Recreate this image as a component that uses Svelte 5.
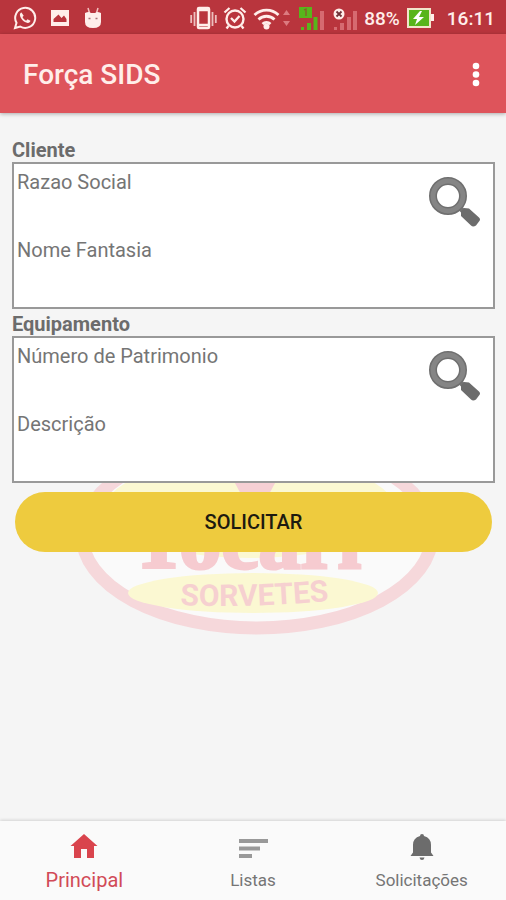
<script>
  const groups = [
    { id: 'cliente', title: 'Cliente', fields: ['Razao Social', 'Nome Fantasia'] },
    { id: 'equipamento', title: 'Equipamento', fields: ['Número de Patrimonio', 'Descrição'] }
  ];
</script>

<div class="screen">
  <div class="status">
    <div class="cluster left">
      <svg width="24" height="24" viewBox="0 0 24 24" aria-hidden="true">
        <path d="M2 22l1.500-5.200A10 10 0 1 1 7.300 20.600Z" fill="none" stroke="#ffeeea" stroke-width="2" />
        <path d="M8.500 6.500c-1 .3-1.800 1.200-1.600 2.600.6 4 4 7.300 7.800 7.800 1.500.1 2.600-.8 2.800-2.100l-3-1.600-1.400 1.500c-1.700-.8-2.900-2-3.600-3.600l1.200-1.400Z" fill="#ffeeea" />
      </svg>
      <svg width="20" height="16" viewBox="0 0 20 16" aria-hidden="true">
        <path fill="#ffeeea" fill-rule="evenodd" d="M1 0h18v16H1ZM3.500 12h13V9l-2.500-3.500-2.500 2.500L8.500 4.500 3.500 9Z" />
      </svg>
      <svg width="20" height="22" viewBox="0 0 20 22" aria-hidden="true">
        <path d="M5 1l1.500 5M15 1l-1.500 5" stroke="#f3c2c0" stroke-width="1.500" />
        <path d="M2 6q2-1 4-1l2 1h4l2-1q2 0 4 1v9q0 6-8 6t-8-6Z" fill="#ffeeea" />
        <path d="M5.500 11.500h2M12.500 11.500h2" stroke="#a87378" stroke-width="1.500" />
      </svg>
    </div>
    <div class="cluster right">
      <svg width="27" height="24" viewBox="0 0 27 24" aria-hidden="true">
        <rect x="8" y="2" width="11" height="20" rx="1" fill="none" stroke="#ffeeea" stroke-width="2.500" />
        <path d="M8 4h11M8 19h11" stroke="#ffeeea" stroke-width="2.500" />
        <path d="M4.500 6v14M22.500 6v14M1.200 9v8M25.800 9v8" stroke="#ffeeea" stroke-opacity=".75" stroke-width="1.800" />
      </svg>
      <svg width="24" height="24" viewBox="0 0 24 24" aria-hidden="true">
        <circle cx="12" cy="13" r="8.500" fill="none" stroke="#ffeeea" stroke-width="2.400" />
        <path d="M1.500 6.500l5-4.500M22.500 6.500l-5-4.500M5.500 20l-2 2.500M18.500 20l2 2.500M8 12l3.500 3.500 5-5.500" fill="none" stroke="#ffeeea" stroke-width="2.300" />
      </svg>
      <svg width="40" height="24" viewBox="0 0 40 24" aria-hidden="true">
        <path d="M1.500 9a17 17 0 0 1 24 0M5.500 13.500a11.500 11.500 0 0 1 16 0M9.500 18a6 6 0 0 1 8 0" fill="none" stroke="#ffeeea" stroke-width="2.800" />
        <circle cx="13.500" cy="20.500" r="3" fill="#ffeeea" />
        <path d="M30 9l3.500-5L37 9ZM30 15l3.500 5 3.500-5Z" fill="#dc7b80" />
      </svg>
      <svg width="28" height="24" viewBox="0 0 28 24" aria-hidden="true">
        <path d="M0 1h13v11H0Z" fill="#58b51b" />
        <path d="M5 4l2-1v7" fill="none" stroke="#8a5a2b" stroke-width="1.300" />
        <path d="M2 21h3v3H2ZM8 17h4v7H8ZM14.500 11h4v13h-4Z" fill="#58b51b" />
        <path d="M21 5h4v19h-4Z" fill="#d66a70" />
      </svg>
      <svg width="25" height="24" viewBox="0 0 25 24" aria-hidden="true">
        <circle cx="6" cy="8" r="5.500" fill="#ffeeea" />
        <path d="M3.500 5.500l5 5M8.500 5.500l-5 5" stroke="#713239" stroke-width="1.800" />
        <path d="M1 21h3v3H1ZM7 17h4v7H7ZM14 11h4v13h-4ZM20 5h4v19h-4Z" fill="#d66a70" />
      </svg>
      <span class="percent">88%</span>
      <svg width="29" height="20" viewBox="0 0 29 20" aria-hidden="true">
        <rect x="2" y="1" width="22" height="18" fill="#58b51b" stroke="#f1e6cb" stroke-width="2" />
        <path d="M25 6h3v7h-3Z" fill="#ffeeea" />
        <path d="M14 3L7 11h4l-2 6 9-8h-5l3-6Z" fill="#fff" />
      </svg>
      <time class="clock">16:11</time>
    </div>
  </div>

  <header>
    <h1>Força SIDS</h1>
    <button class="more" aria-label="Mais opções">
      <svg width="8" height="26" viewBox="0 0 8 26" aria-hidden="true">
        <circle cx="4" cy="4" r="3.300" /><circle cx="4" cy="12.500" r="3.300" /><circle cx="4" cy="21" r="3.300" />
      </svg>
    </button>
  </header>

  <main>
    {#each groups as group}
      <section aria-labelledby={group.id}>
        <h2 id={group.id}>{group.title}</h2>
        <div class="box">
          <div class="fields">
            {#each group.fields as field}
              <p>{field}</p>
            {/each}
          </div>
          <button class="search" aria-label="Buscar {group.title}">
            <svg width="54" height="54" viewBox="0 0 54 54" aria-hidden="true">
              <path d="M32 32l5 5" stroke="#777" stroke-width="5" />
              <circle cx="21" cy="21" r="15" fill="none" stroke="#6f6f6f" stroke-width="8" />
              <circle cx="21" cy="21" r="15" fill="none" stroke="#858585" stroke-width="5" />
              <path d="M34 36l3-3 5 .5 10 9q2 2 0 4l-3 4q-3 2-5 0L34 41Z" fill="#6c6c6c" />
            </svg>
          </button>
        </div>
      </section>
    {/each}

    <div class="action">
      <svg class="logo" width="366" height="220" viewBox="0 0 366 220" aria-hidden="true">
        <ellipse cx="183" cy="119" rx="175" ry="93" fill="#fafafa" stroke="#f6d8db" stroke-width="13" />
        <ellipse cx="176" cy="92" rx="144" ry="50" fill="#fbf8d2" />
        <path d="M155 56h52l-14 26h-24Z" fill="#f6d0d4" />
        <text class="brand" x="172" y="152" text-anchor="middle">Tocarí</text>
        <ellipse cx="179" cy="177" rx="125" ry="20" fill="#fbf8d2" />
        <path id="arc" d="M79 188Q180 194 282 182" fill="none" />
        <text class="sub"><textPath href="#arc" startOffset="50%" text-anchor="middle">SORVETES</textPath></text>
      </svg>
      <button class="submit">SOLICITAR</button>
    </div>
  </main>

  <nav>
    <a href="#principal" class="active" aria-current="page">
      <svg width="28" height="28" viewBox="0 0 28 28" aria-hidden="true">
        <path d="M14 2L.5 14h3.500v12h7v-9h6v9h7V14h3.500Z" fill="#d9444d" />
      </svg>
      <span>Principal</span>
    </a>
    <a href="#listas">
      <svg width="30" height="28" viewBox="0 0 30 28" aria-hidden="true">
        <path d="M1 7h29v4H1ZM1 14.500h21v4H1ZM1 22h13v4H1Z" fill="#999" />
      </svg>
      <span>Listas</span>
    </a>
    <a href="#solicitacoes">
      <svg width="24" height="28" viewBox="0 0 24 28" aria-hidden="true">
        <path d="M12 2q2 0 2 2 7 1.800 7 9v7.500l2.500 3.500H.5L3 20.500V13q0-7.200 7-9Q10 2 12 2ZM9.500 25.500h5q-.5 2.500-2.500 2.500t-2.500-2.500Z" fill="#6c6c6c" />
      </svg>
      <span>Solicitações</span>
    </a>
  </nav>
</div>

<style>
  :global(body) { margin: 0; background: #f5f5f5; }
  .screen {
    min-height: 100vh;
    display: flex;
    flex-direction: column;
    font-family: Roboto, "Liberation Sans", sans-serif;
    color: #757575;
    background: #f5f5f5;
  }
  button { border: 0; padding: 0; background: none; font: inherit; cursor: pointer; }
  svg { display: block; flex: none; }
  h1, h2, p { margin: 0; }

  .status {
    height: 34px;
    display: flex;
    align-items: center;
    justify-content: space-between;
    padding: 2px 11px 0 13px;
    box-sizing: border-box;
    background: #b9353d;
    color: #ffeeea;
    font-size: 19px;
    font-weight: 500;
  }
  .cluster { display: flex; align-items: center; }
  .left { gap: 13px; }
  .right { gap: 6px; }
  .clock { margin-left: 6px; }

  header {
    height: 79px;
    display: flex;
    align-items: center;
    justify-content: space-between;
    padding: 2px 16px 0 23px;
    box-sizing: border-box;
    background: #de545b;
    box-shadow: 0 1px 4px rgba(0, 0, 0, 0.3);
  }
  h1 { font-size: 28px; line-height: 36px; font-weight: 500; color: #ffeeea; }
  .more { width: 28px; height: 40px; display: flex; align-items: center; justify-content: center; }
  .more svg { fill: #fff; }

  main { flex: 1; padding: 25px 11px 16px 12px; }
  section { position: relative; z-index: 1; margin-bottom: 3px; }
  h2 { font-size: 20px; line-height: 24px; font-weight: 700; color: #6c6c6c; }
  .box {
    display: flex;
    justify-content: space-between;
    align-items: flex-start;
    min-height: 147px;
    border: 2px solid #999;
    background: #fff;
    box-sizing: border-box;
    padding: 6px 12px 0 3px;
  }
  .fields { display: flex; flex-direction: column; gap: 44px; }
  p { font-size: 20px; line-height: 24px; }
  .search { margin-top: 5px; }

  .action { position: relative; padding: 6px 3px 0; }
  .logo { position: absolute; left: 50%; bottom: -84px; margin-left: -180px; }
  .brand { font: 700 84px "Liberation Serif", serif; fill: #f6cbd0; stroke: #f6cbd0; stroke-width: 3px; }
  .sub { font: 700 30px Roboto, "Liberation Sans", sans-serif; fill: #f6d0d0; }
  .submit {
    position: relative;
    display: block;
    width: 100%;
    height: 60px;
    border-radius: 30px;
    background: #eecb3e;
    color: #1c1a10;
    font-size: 20px;
    font-weight: 500;
  }

  nav {
    display: flex;
    height: 79px;
    background: #fafafa;
    box-shadow: 0 -1px 3px rgba(0, 0, 0, 0.14);
  }
  nav a {
    flex: 1;
    display: flex;
    flex-direction: column;
    align-items: center;
    justify-content: center;
    gap: 8px;
    padding-top: 2px;
    color: #757575;
    text-decoration: none;
    font-size: 17px;
    line-height: 24px;
  }
  nav .active { color: #d14a57; font-size: 20px; }
</style>
